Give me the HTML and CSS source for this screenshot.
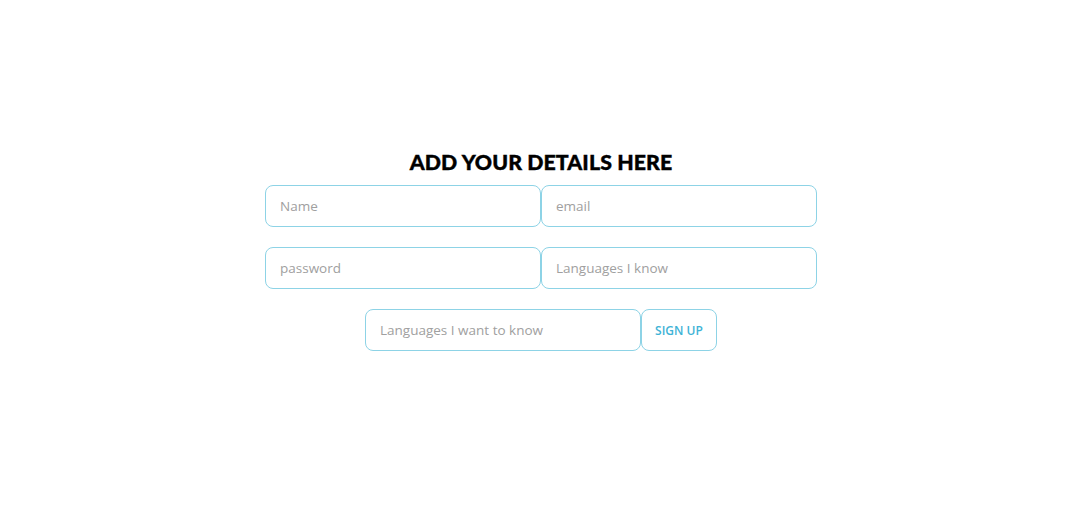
FILE: index.html
```html
<!DOCTYPE html>
<html>
<head>
<meta charset="utf-8">
<link rel="stylesheet" href="styles.css">
</head>
<body>
<main class="page">
  <form class="form">
    <h1 class="title">ADD YOUR DETAILS HERE</h1>
    <div class="row">
      <input class="field" type="text" placeholder="Name">
      <input class="field" type="text" placeholder="email">
    </div>
    <div class="row">
      <input class="field" type="password" placeholder="password">
      <input class="field" type="text" placeholder="Languages I know">
    </div>
    <div class="row">
      <input class="field" type="text" placeholder="Languages I want to know">
      <button class="btn" type="button">SIGN UP</button>
    </div>
  </form>
</main>
</body>
</html>
```
FILE: styles.css
```css
html, body {
  margin: 0;
  padding: 0;
  background: #ffffff;
}
.page {
  width: 1080px;
  height: 516px;
  display: flex;
  justify-content: center;
  padding-top: 149px;
  box-sizing: border-box;
  font-family: "Open Sans", "Noto Sans", sans-serif;
}
.form {
  display: flex;
  flex-direction: column;
  align-items: center;
  gap: 20px;
  padding-left: 2px;
}
.title {
  margin: 0 0 -10px 0;
  font-family: "Lato", sans-serif;
  font-weight: 900;
  font-size: 21.3px;
  line-height: 26px;
  color: #000;
  letter-spacing: 0.1px;
  -webkit-text-stroke: 0.4px #000;
}
.row {
  display: flex;
}
.field {
  width: 276px;
  height: 42px;
  box-sizing: border-box;
  border: 1px solid #8dd3e6;
  border-radius: 8px;
  padding: 0 14px;
  font-family: "Open Sans", sans-serif;
  font-size: 13.5px;
  color: #333;
  outline: none;
  background: #fff;
}
.field::placeholder {
  color: #a0a0a0;
}
.btn {
  width: 76px;
  height: 42px;
  box-sizing: border-box;
  border: 1px solid #8dd3e6;
  border-radius: 8px;
  background: #fff;
  color: #3fb3d6;
  font-family: "Open Sans", sans-serif;
  font-weight: 600;
  font-size: 12px;
  padding: 0;
  cursor: pointer;
}
```
